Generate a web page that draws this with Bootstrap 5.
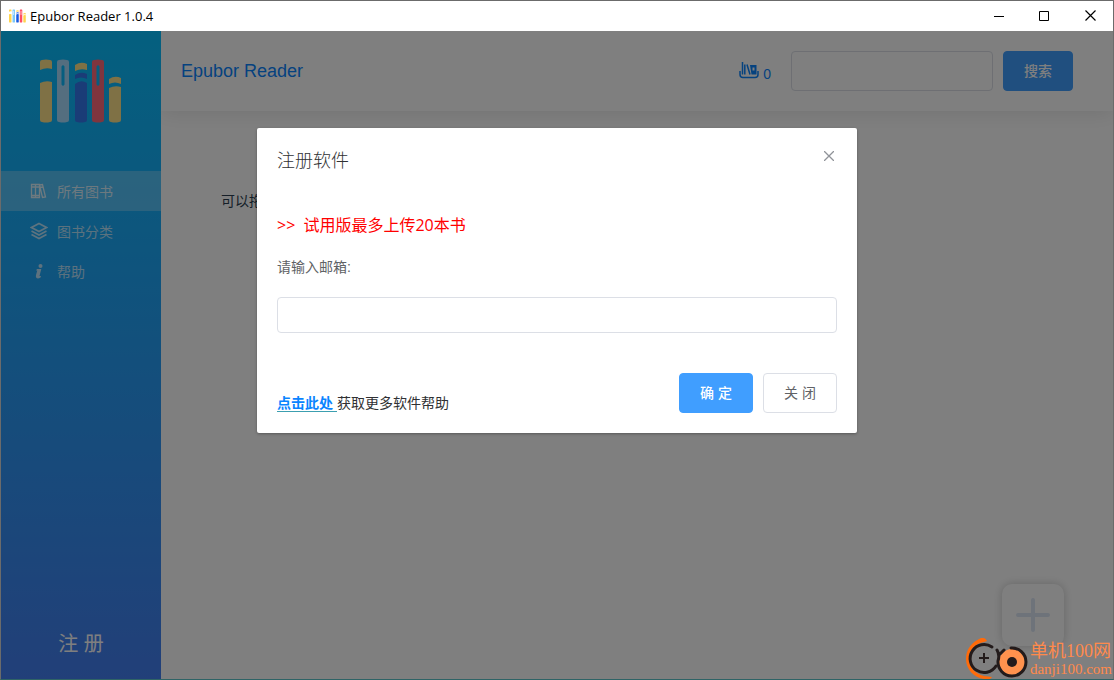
<!DOCTYPE html>
<html lang="zh-CN">
<head>
<meta charset="utf-8">
<meta name="viewport" content="width=device-width, initial-scale=1">
<title>Epubor Reader 1.0.4</title>
<link href="https://cdn.jsdelivr.net/npm/bootstrap@5.3.0/dist/css/bootstrap.min.css" rel="stylesheet">
<style>
body{font-family:"Liberation Sans","Noto Sans CJK SC",sans-serif;font-size:14px;line-height:20px;color:#303133;background:#fff}
.app-window{border:1px solid #6b6b6b;border-bottom-color:#2f6466}
.titlebar{height:30px;font-family:"Open Sans","Noto Sans CJK SC",sans-serif;font-size:13px;color:#000;padding-left:8px}
.titlebar button{width:46px;height:30px;border:0;background:none;padding:0 0 4px}
.titlebar button:first-of-type{width:45px}
.workspace{isolation:isolate}
.side{width:160px;background:linear-gradient(#08c0ff,#447ff2)}
.brand-area{height:140px;padding-top:28px}
.side a{height:40px;padding:2px 0 0 29px;gap:9px;color:rgba(255,255,255,.7)}
.side a.current{background:rgba(255,255,255,.27);color:rgba(255,255,255,.8)}
.side a svg{margin-bottom:2px}
.register{font-size:20px;line-height:28px;color:#fff;background:none;border:0;margin-bottom:20px}
.topbar{height:80px;padding:0 40px 0 20px;box-shadow:0 2px 20px rgba(0,0,0,.1)}
.app-name{font-size:18px;color:#0a84ff}
.counter{color:#0a84ff;gap:4px;margin-right:20px}
.counter span{padding-top:6px}
.search-box{width:202px;height:40px;border:1px solid #dcdfe6;border-radius:4px}
.act{height:40px;border-radius:4px;font-size:14px;line-height:20px;padding:0 20px}
.act-main{background:#409eff;border:1px solid #409eff;color:#fff;font-weight:500}
.act-plain{background:#fff;border:1px solid #dcdfe6;color:#606266}
.search-go{width:70px;margin-left:10px}
.drop-hint{padding:80px 60px;color:#2c3e50}
.add-book{right:49px;bottom:33px;width:62px;height:62px;border:0;border-radius:10px;background:#fff;box-shadow:0 0 10px rgba(0,0,0,.2)}
.shade{background:rgba(0,0,0,.5);padding-top:97px}
.dialog-box{width:600px;max-width:90%;border-radius:2px;box-shadow:0 1px 3px rgba(0,0,0,.3);padding:20px}
.dialog-box h1{font-size:18px;line-height:24px;font-weight:300;margin:0;padding-top:1px}
.shut{border:0;background:none;padding:0;width:16px;height:16px}
.limit{font-family:"Open Sans","Noto Sans CJK SC",sans-serif;font-size:16px;line-height:24px;color:#f00;margin:40px 0 20px}
.ask{color:#606266;margin-bottom:20px}
.mail{height:36px;border:1px solid #dcdfe6;border-radius:4px}
.dialog-foot{margin-top:40px}
.dialog-foot .act{width:74px;margin-left:10px}
.help-link{color:#0a84ff;font-weight:700;border-bottom:1px solid #3c9fb0;white-space:pre}
.site-mark{right:1px;bottom:-1px;font-family:"Liberation Serif","Noto Sans CJK SC",serif;color:#ff8a4c;gap:2px}
.mark-name{font-size:18px;line-height:20px}
.mark-site{font-size:15px;line-height:17px}
.tone-gold{fill:var(--gold,#ffe28a)}
.tone-pale{fill:var(--pale,#a8dcff)}
.tone-blue{fill:var(--blue,#3578ee)}
.tone-red{fill:var(--red,#ff6b7c)}
.titlebar svg{--gold:#ffd44d;--pale:#7cc8fa;--blue:#1458e0;--red:#ff4d63}
</style>
</head>
<body>
<svg width="0" height="0" class="position-absolute" aria-hidden="true">
<symbol id="books" viewBox="0 0 82 64">
<path class="tone-gold" d="M0 3Q0 1 2 1Q6 0 10 1Q12 1 12 3V10Q6 8 0 11ZM0 24Q6 21 12 23V61Q12 63 10 63Q6 64 2 63Q0 63 0 61ZM69 20Q75 16 81 19V25Q75 22 69 25ZM69 29Q75 26 81 28V61Q81 63 79 63Q75 64 71 63Q69 63 69 61ZM35 6Q41 2 47 5V11Q41 9 35 12Z"/>
<path class="tone-pale" fill-rule="evenodd" d="M17 3Q17 1 19 1Q23 0 27 1Q29 1 29 3V61Q29 63 27 63Q23 64 19 63Q17 63 17 61ZM21.500 7.500V25.500Q23 28 24.500 25.500V7.500Q23 5 21.500 7.500Z"/>
<path class="tone-blue" d="M35 16Q41 12 47 15V20Q41 17 35 20ZM35 25Q41 20 47 24V61Q47 63 45 63Q41 64 37 63Q35 63 35 61Z"/>
<path class="tone-red" fill-rule="evenodd" d="M52 3Q52 1 54 1Q58 0 62 1Q64 1 64 3V61Q64 63 62 63Q58 64 54 63Q52 63 52 61ZM56.500 7.500V25.500Q58 28 59.500 25.500V7.500Q58 5 56.500 7.500Z"/>
</symbol>
</svg>
<div class="app-window vh-100 d-flex flex-column overflow-hidden">
<header class="titlebar d-flex align-items-center bg-white">
<svg width="17" height="14" class="me-1" aria-hidden="true"><use href="#books"/></svg>
<span class="me-auto">Epubor Reader 1.0.4</span>
<button aria-label="最小化"><svg width="10" height="10"><path d="M0 5.500H10" stroke="#000"/></svg></button>
<button aria-label="最大化"><svg width="10" height="10"><path d="M.5.5H9.500V9.500H.5Z" stroke="#000" fill="none"/></svg></button>
<button aria-label="退出"><svg width="11" height="11"><path d="M.5.5L10.500 10.500M10.500.5L.5 10.500" stroke="#000" stroke-width="1.200"/></svg></button>
</header>
<div class="workspace d-flex flex-grow-1 position-relative overflow-hidden">
<nav class="side d-flex flex-column flex-shrink-0 position-relative z-1">
<div class="brand-area text-center"><svg width="82" height="64" aria-hidden="true"><use href="#books"/></svg></div>
<a href="#" class="current d-flex align-items-center text-decoration-none"><svg width="18" height="18" viewBox="0 0 18 18" fill="none" stroke="currentColor" stroke-width="1.300"><path d="M1.500 2.500H5.500V15.500H1.500ZM5.500 2.500H9.500V15.500H5.500ZM1.500 5H9.500M1.500 13.500H9.500M9.500 3L12.500 2.500 15.500 15 12.500 15.500ZM10 5.500L13 5"/></svg>所有图书</a>
<a href="#" class="d-flex align-items-center text-decoration-none"><svg width="18" height="18" viewBox="0 0 18 18" fill="none" stroke="currentColor" stroke-width="1.700"><path d="M9 1.500L16.500 5.500 9 9.500 1.500 5.500ZM1.500 9L9 13 16.500 9M1.500 12.500L9 16.500 16.500 12.500"/></svg>图书分类</a>
<a href="#" class="d-flex align-items-center text-decoration-none"><svg width="18" height="18" viewBox="0 0 18 18" fill="currentColor"><circle cx="10.500" cy="4" r="2"/><path d="M7 7H11.300L9.500 14H11L10.500 15.500Q8 17 6.500 16 5.500 15 6 13L7.300 8.500H6Z"/></svg>帮助</a>
<button class="register mt-auto">注 册</button>
</nav>
<main class="flex-grow-1 d-flex flex-column position-relative">
<div class="topbar d-flex align-items-center">
<span class="app-name me-auto">Epubor Reader</span>
<span class="counter d-flex align-items-center"><svg width="20" height="18" viewBox="0 0 20 18" fill="none" stroke="currentColor" stroke-width="1.500"><path d="M1 9V12.500Q1 15.500 4 15.500H16Q19 15.500 19 12.500V9M3.500 0V12.500M5.800 2.500V12.500M8 2.500L11 12.500"/><path d="M11 3H17.500V12.500H12.500ZM13.500 5.500V8.500H15.500V5.500Z" fill="currentColor" fill-rule="evenodd" stroke="none"/></svg><span>0</span></span>
<input class="search-box bg-white px-3" type="text" aria-label="搜索图书"><button class="act act-main search-go">搜索</button>
</div>
<p class="drop-hint mb-0">可以拖拽图书到此处</p>
<button class="add-book position-absolute p-0" aria-label="添加图书"><svg width="34" height="34"><path d="M17 2V32M2 17H32" stroke="#dce6f5" stroke-width="4" stroke-linecap="round"/></svg></button>
</main>
<div class="shade position-absolute top-0 start-0 w-100 h-100 z-2">
<section class="dialog-box bg-white mx-auto" role="dialog" aria-labelledby="dialog-title">
<div class="d-flex align-items-start justify-content-between"><h1 id="dialog-title">注册软件</h1><button class="shut d-flex align-items-center justify-content-center" aria-label="关闭"><svg width="10" height="10"><path d="M0 0L10 10M10 0L0 10" stroke="#909399" stroke-width="1.300"/></svg></button></div>
<p class="limit"><span class="me-1">&gt;&gt;</span> 试用版最多上传20本书</p>
<label class="ask d-block" for="mail">请输入邮箱:</label>
<input class="mail d-block w-100 px-3" id="mail" type="email">
<div class="dialog-foot d-flex align-items-end"><span class="me-auto"><a href="#" class="help-link text-decoration-none">点击此处 </a>获取更多软件帮助</span><button class="act act-main">确 定</button><button class="act act-plain">关 闭</button></div>
</section>
</div>
<div class="site-mark position-absolute d-flex align-items-center z-3"><svg width="62" height="42" viewBox="0 0 62 42" fill="none"><path d="M15 0Q19-1 21 3L18 4C10 5 3 12 3 20C3 29 9 36 18 38L26 39Q23 43 18 41C8 40 0 31 0 21C0 11 6 4 15 0Z" fill="#ff6b0a"/><path d="M26 9A14 14 0 1 0 30 28" stroke="#231b1b" stroke-width="3" stroke-linecap="round"/><path d="M18 15V25M13 20H23" stroke="#231b1b" stroke-width="2"/><circle cx="46" cy="24" r="13" fill="#ff924e"/><path d="M31 12Q34 17 32 23A14 14 0 1 0 45 10M34 16L38 12" stroke="#231b1b" stroke-width="3" stroke-linecap="round"/><circle cx="46" cy="24" r="5" fill="#231b1b"/></svg><div><div class="mark-name">单机100网</div><div class="mark-site">danji100.com</div></div></div>
</div>
</div>
<script src="https://cdn.jsdelivr.net/npm/bootstrap@5.3.0/dist/js/bootstrap.bundle.min.js"></script>
</body>
</html>
